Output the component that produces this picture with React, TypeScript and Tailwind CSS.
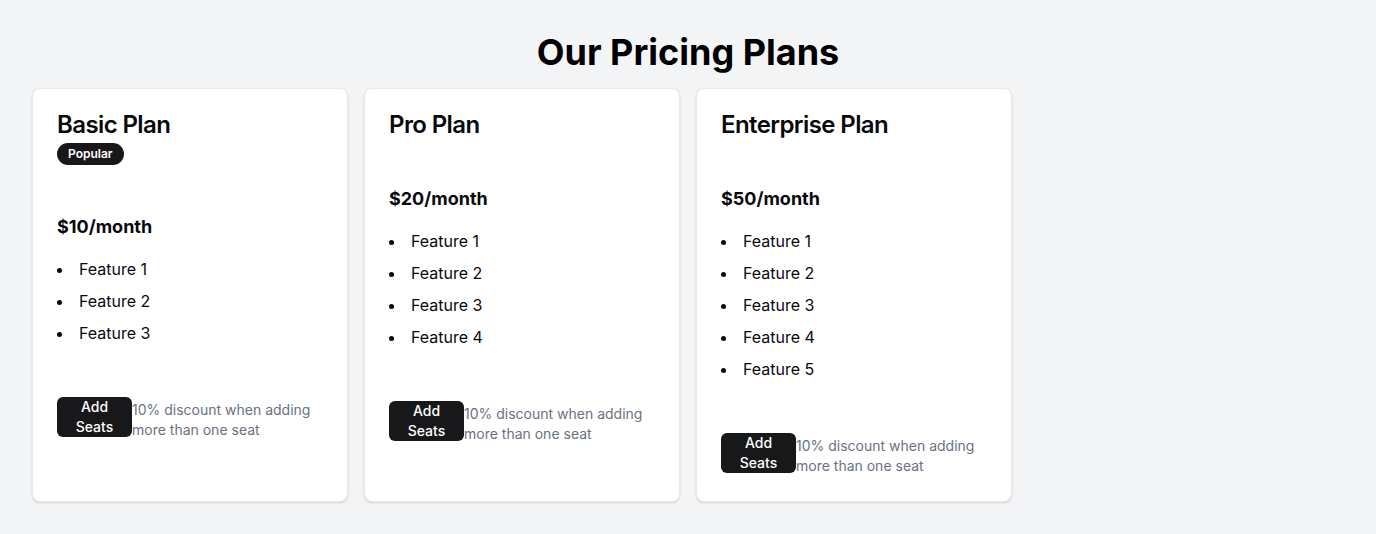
const plans = [
  { name: "Basic Plan", popular: true, price: "$10/month", features: ["Feature 1", "Feature 2", "Feature 3"] },
  { name: "Pro Plan", popular: false, price: "$20/month", features: ["Feature 1", "Feature 2", "Feature 3", "Feature 4"] },
  {
    name: "Enterprise Plan",
    popular: false,
    price: "$50/month",
    features: ["Feature 1", "Feature 2", "Feature 3", "Feature 4", "Feature 5"],
  },
];

function PlanCard({ plan }: { plan: (typeof plans)[number] }) {
  return (
    <div className="flex flex-col rounded-lg border border-gray-200 bg-white p-6 pb-[25px] text-[#09090b] shadow-sm">
      <div className="flex flex-col items-start">
        <h3 className="text-2xl leading-none font-semibold tracking-tight">{plan.name}</h3>
        {plan.popular && (
          <span className="mt-1.5 inline-flex items-center rounded-full border border-transparent bg-[#18181b] px-2.5 py-0.5 text-xs font-semibold text-white">
            Popular
          </span>
        )}
      </div>
      <p className="mt-[48px] mb-4 text-lg leading-7 font-bold">{plan.price}</p>
      <ul className="list-inside list-disc space-y-2 text-base">
        {plan.features.map((f) => (
          <li key={f}>{f}</li>
        ))}
      </ul>
      <div className="mt-[52px] flex items-start">
        <button className="flex h-10 w-[75px] shrink-0 items-center justify-center rounded-md bg-[#18181b] px-4 text-center text-sm leading-5 font-medium text-white">
          Add Seats
        </button>
        <p className="mt-[3px] text-sm leading-5 text-gray-500">10% discount when adding more than one seat</p>
      </div>
    </div>
  );
}

export default function App() {
  return (
    <div className="min-h-screen bg-gray-100 p-8 font-['Inter',sans-serif]">
      <h1 className="mb-4 text-center text-4xl font-bold text-black">Our Pricing Plans</h1>
      <div className="grid grid-cols-4 gap-4">
        {plans.map((plan) => (
          <PlanCard key={plan.name} plan={plan} />
        ))}
      </div>
    </div>
  );
}
